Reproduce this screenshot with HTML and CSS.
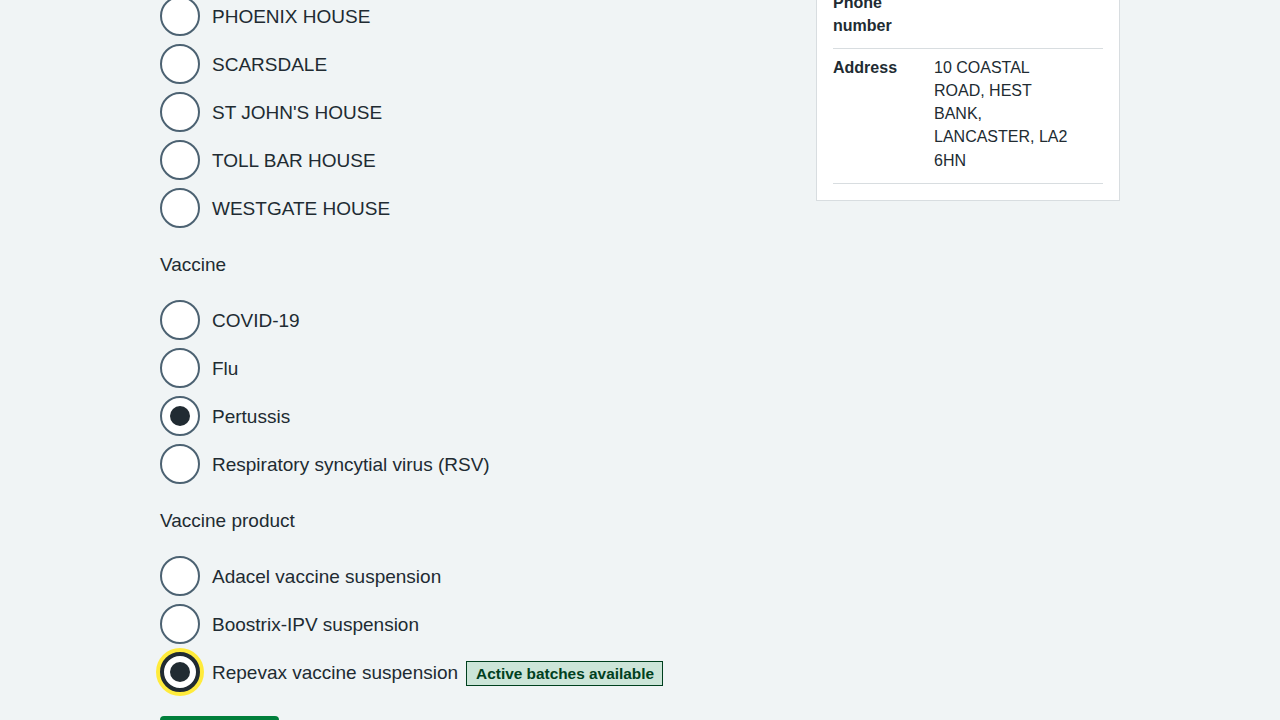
FILE: index.html
```html
<!DOCTYPE html>
<html lang="en">
<head>
<meta charset="utf-8">
<title>Record a vaccination</title>
<link rel="stylesheet" href="styles.css">
</head>
<body>
<div class="page">
  <div class="main">
    <div class="radios">
      <div class="radio"><span class="radio-input"></span><span class="radio-label">PHOENIX HOUSE</span></div>
      <div class="radio"><span class="radio-input"></span><span class="radio-label">SCARSDALE</span></div>
      <div class="radio"><span class="radio-input"></span><span class="radio-label">ST JOHN'S HOUSE</span></div>
      <div class="radio"><span class="radio-input"></span><span class="radio-label">TOLL BAR HOUSE</span></div>
      <div class="radio"><span class="radio-input"></span><span class="radio-label">WESTGATE HOUSE</span></div>
    </div>

    <div class="fieldset">
      <div class="legend">Vaccine</div>
      <div class="radios">
        <div class="radio"><span class="radio-input"></span><span class="radio-label">COVID-19</span></div>
        <div class="radio"><span class="radio-input"></span><span class="radio-label">Flu</span></div>
        <div class="radio"><span class="radio-input checked"></span><span class="radio-label">Pertussis</span></div>
        <div class="radio"><span class="radio-input"></span><span class="radio-label">Respiratory syncytial virus (RSV)</span></div>
      </div>
    </div>

    <div class="fieldset">
      <div class="legend">Vaccine product</div>
      <div class="radios">
        <div class="radio"><span class="radio-input"></span><span class="radio-label">Adacel vaccine suspension</span></div>
        <div class="radio"><span class="radio-input"></span><span class="radio-label">Boostrix-IPV suspension</span></div>
        <div class="radio"><span class="radio-input checked focused"></span><span class="radio-label">Repevax vaccine suspension</span><span class="tag">Active batches available</span></div>
      </div>
    </div>

    <button class="button" type="button">Continue</button>
  </div>

  <aside class="side">
    <div class="card">
      <div class="row">
        <div class="key">Phone number</div>
        <div class="value"></div>
      </div>
      <div class="row">
        <div class="key">Address</div>
        <div class="value">10 COASTAL ROAD, HEST BANK, LANCASTER, LA2 6HN</div>
      </div>
    </div>
  </aside>
</div>
</body>
</html>
```

FILE: styles.css
```css
html, body {
  margin: 0;
  padding: 0;
}

body {
  background: #f0f4f5;
  color: #212b32;
  font-family: "Liberation Sans", Arial, sans-serif;
  font-size: 19px;
  line-height: 28px;
  overflow: hidden;
}

.page {
  width: 960px;
  margin: 0 auto;
  display: flex;
  justify-content: space-between;
  align-items: flex-start;
}

.main {
  width: 608px;
  margin-top: -4px;
}

.radios {
  display: flex;
  flex-direction: column;
  gap: 8px;
}

.radio {
  display: flex;
  align-items: center;
  height: 40px;
}

.radio-input {
  flex: none;
  box-sizing: border-box;
  width: 40px;
  height: 40px;
  border: 2px solid #4c6272;
  border-radius: 50%;
  background: #ffffff;
  position: relative;
}

.radio-input.checked::after {
  content: "";
  position: absolute;
  left: 50%;
  top: 50%;
  width: 20px;
  height: 20px;
  margin: -10px 0 0 -10px;
  border-radius: 50%;
  background: #212b32;
}

.radio-input.focused {
  border: 4px solid #212b32;
  box-shadow: 0 0 0 4px #ffeb3b;
}

.radio-label {
  padding-left: 12px;
  padding-top: 2px;
}

.fieldset {
  margin-top: 22px;
}

.legend {
  padding-top: 1px;
  margin-bottom: 21px;
}

.tag {
  margin-left: 8px;
  display: inline-block;
  border: 1px solid #00401e;
  background: #cce5d8;
  color: #00401e;
  font-size: 15.4px;
  font-weight: 700;
  line-height: 23px;
  padding: 0 8px 0 9px;
  margin-top: 2px;
  white-space: nowrap;
}

.button {
  margin-top: 24px;
  display: block;
  background: #007f3b;
  color: #ffffff;
  border: 0;
  border-radius: 4px;
  font-family: inherit;
  font-size: 19px;
  font-weight: 600;
  line-height: 24px;
  padding: 12px 18.5px;
  box-shadow: 0 4px 0 #00401e;
}

.side {
  width: 304px;
  margin-top: -33px;
}

.card {
  background: #ffffff;
  border: 1px solid #d8dde0;
  padding: 16px 16px 16px;
}

.row {
  display: grid;
  grid-template-columns: 101px 136px;
  padding: 7px 0 11px;
  border-bottom: 1px solid #d8dde0;
  font-size: 16px;
  line-height: 23.3px;
}

.row:first-child {
  padding-bottom: 10px;
}

.key {
  font-weight: 700;
  padding-right: 16px;
}
```
